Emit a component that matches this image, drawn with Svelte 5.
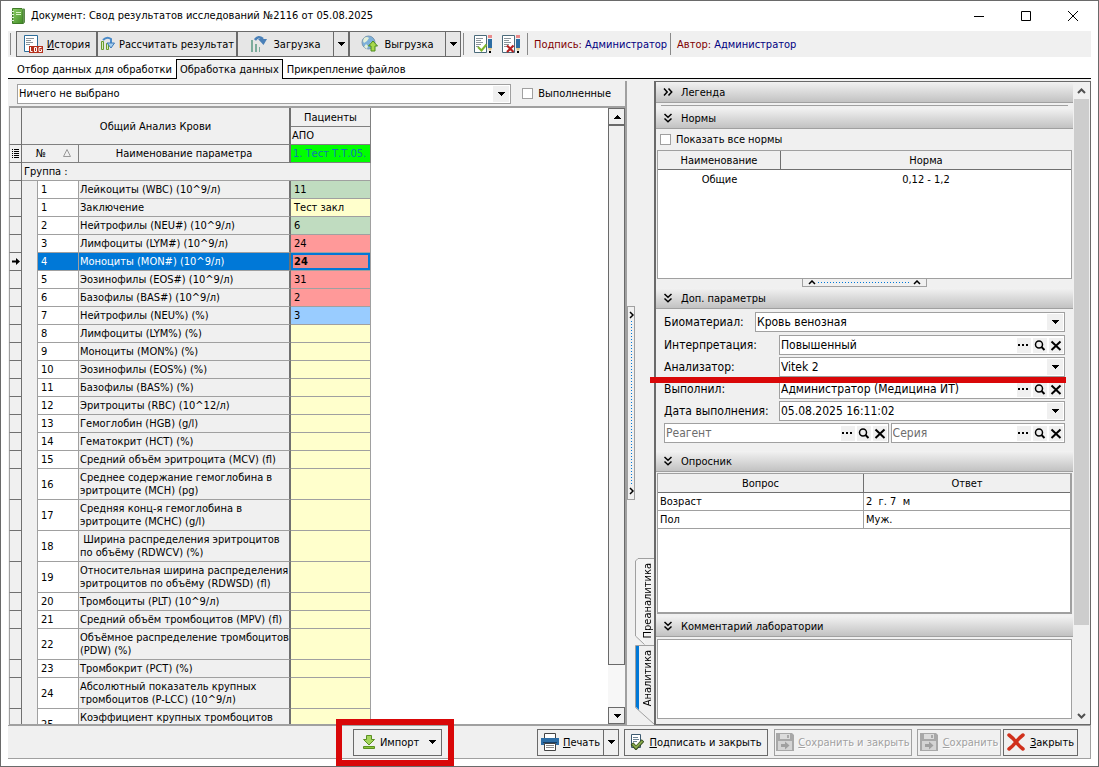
<script>
  const columns = { group: "Общий Анализ Крови", patients: "Пациенты", code: "АПО" };

  const rows = [
    { no: "1", name: "Лейкоциты (WBC) (10^9/л)", value: "11", state: "normal" },
    { no: "1", name: "Заключение", value: "Тест закл", state: "empty" },
    { no: "2", name: "Нейтрофилы (NEU#) (10^9/л)", value: "6", state: "normal" },
    { no: "3", name: "Лимфоциты (LYM#) (10^9/л)", value: "24", state: "high" },
    { no: "4", name: "Моноциты (MON#) (10^9/л)", value: "24", state: "high", selected: true },
    { no: "5", name: "Эозинофилы (EOS#) (10^9/л)", value: "31", state: "high" },
    { no: "6", name: "Базофилы (BAS#) (10^9/л)", value: "2", state: "high" },
    { no: "7", name: "Нейтрофилы (NEU%) (%)", value: "3", state: "low" },
    { no: "8", name: "Лимфоциты (LYM%) (%)" },
    { no: "9", name: "Моноциты (MON%) (%)" },
    { no: "10", name: "Эозинофилы (EOS%) (%)" },
    { no: "11", name: "Базофилы (BAS%) (%)" },
    { no: "12", name: "Эритроциты (RBC) (10^12/л)" },
    { no: "13", name: "Гемоглобин (HGB) (g/l)" },
    { no: "14", name: "Гематокрит (HCT) (%)" },
    { no: "15", name: "Средний объём эритроцита (MCV) (fl)" },
    { no: "16", name: "Среднее содержание гемоглобина в\nэритроците (MCH) (pg)" },
    { no: "17", name: "Средняя конц-я гемоглобина в\nэритроците (MCHC) (g/l)" },
    { no: "18", name: " Ширина распределения эритроцитов\nпо объёму (RDWCV) (%)" },
    { no: "19", name: "Относительная ширина распределения\nэритроцитов по объёму (RDWSD) (fl)" },
    { no: "20", name: "Тромбоциты (PLT) (10^9/л)" },
    { no: "21", name: "Средний объём тромбоцитов (MPV) (fl)" },
    { no: "22", name: "Объёмное распределение тромбоцитов\n(PDW) (%)" },
    { no: "23", name: "Тромбокрит (PCT) (%)" },
    { no: "24", name: "Абсолютный показатель крупных\nтромбоцитов (P-LCC) (10^9/л)" },
    { no: "25", name: "Коэффициент крупных тромбоцитов\n(P-LCR) (%)" },
  ];

  const answers = [
    { question: "Возраст", answer: "2  г. 7  м" },
    { question: "Пол", answer: "Муж." },
  ];

  let tab = "process";
  let onlyDone = false;
  let allNorms = false;
  let interpretation = "Повышенный";
  let performer = "Администратор (Медицина ИТ)";
  let reagent = "";
  let series = "";
</script>

{#snippet arrow()}
  <svg class="arrow" width="8" height="4" viewBox="0 0 8 4" shape-rendering="crispEdges"><path d="M0 0h8L4 4z" /></svg>
{/snippet}

{#snippet chevrons(open)}
  <svg class="chevrons" width="10" height="10" viewBox="0 0 10 10" fill="none" stroke="#000" stroke-width="1.5">
    {#if open}
      <path d="M1.500 1L5 4.200 8.500 1M1.500 5.500L5 8.700 8.500 5.500" />
    {:else}
      <path d="M1 1.500L4.200 5 1 8.500M5.500 1.500L8.700 5 5.500 8.500" />
    {/if}
  </svg>
{/snippet}

{#snippet sheet(ok)}
  <svg width="20" height="20" viewBox="0 0 20 20">
    <path d="M1.500 1.500h12v17h-12z" fill="#fff" stroke="#4a6a7a" />
    <path d="M3 4.500h7M3 6.500h5M3 8.500h7M3 10.500h5M3 12.500h3" stroke="#8a949a" />
    {#if ok}
      <path d="M5 13l3.500 3.500 5-6" fill="none" stroke="#7fb52c" stroke-width="2" />
    {:else}
      <path d="M6 11.500l6.500 6.500M12.500 11.500L6 18" stroke="#b52020" stroke-width="2.200" />
    {/if}
    <path d="M15 1h4v3h-4z" fill="#e98a8a" />
    <path d="M15 5h4v9h-4z" fill="#2d6da3" />
    <path d="M15 14h4l-1 2.500h-2z" fill="#e3c88a" />
    <path d="M16 17h2v2h-2z" fill="#000" />
  </svg>
{/snippet}

{#snippet disk()}
  <svg width="18" height="18" viewBox="0 0 18 18">
    <path d="M0 0h16l2 2v16H0z" fill="#a8a8a8" />
    <path d="M4 1h10v5H4z" fill="#dcdcdc" />
    <path d="M11 2h2v3h-2z" fill="#a8a8a8" />
    <path d="M2 8h14v9H2z" fill="#d4d4d4" />
    <path d="M5 11h4V8.500l4.500 4-4.500 4V14H5z" fill="#a0a0a0" />
  </svg>
{/snippet}

{#snippet pickers(name)}
  <button class="pick" aria-label="Выбрать: {name}">
    <svg width="14" height="15" viewBox="0 0 14 15" shape-rendering="crispEdges"><path d="M1 6h2v2H1zM5 6h2v2H5zM9 6h2v2H9z" /></svg>
  </button>
  <button class="pick" aria-label="Найти: {name}">
    <svg width="14" height="15" viewBox="0 0 14 15" fill="none" stroke="#000">
      <circle cx="6" cy="6.500" r="3.500" stroke-width="1.500" />
      <path d="M8.500 9l3 3" stroke-width="2" />
    </svg>
  </button>
  <button class="pick" aria-label="Очистить: {name}">
    <svg width="14" height="15" viewBox="0 0 14 15" stroke="#000" stroke-width="2"><path d="M2.500 3.500l9 8.500M11.500 3.500l-9 8.500" /></svg>
  </button>
{/snippet}

<div class="window">
  <header class="titlebar">
    <svg width="14" height="16" viewBox="0 0 14 16">
      <defs>
        <linearGradient id="cover" x1="0" y1="0" x2="1" y2="1">
          <stop offset="0" stop-color="#8fd068" />
          <stop offset="1" stop-color="#3f8a24" />
        </linearGradient>
      </defs>
      <path d="M12 1h1.500v13.500L12 15.500z" fill="#c9d8c0" stroke="#5a8a48" />
      <path d="M1.500.5h9.500l1 1v14H1.500z" fill="url(#cover)" stroke="#3f7a28" />
      <path d="M5 4h5v1H5zM5 6h5v1H5z" fill="#d8f4c4" />
      <path d="M0 3.500h3M0 6.500h3M0 9.500h3M0 12.500h3" stroke="#dfeedd" />
    </svg>
    <h1>Документ: Свод результатов исследований №2116 от 05.08.2025</h1>
    <div class="controls">
      <button aria-label="Свернуть"><svg width="12" height="12" viewBox="0 0 12 12"><path d="M1 6.500h10" stroke="#000" /></svg></button>
      <button aria-label="Развернуть"><svg width="12" height="12" viewBox="0 0 12 12"><path d="M1.500 1.500h9v9h-9z" fill="none" stroke="#000" /></svg></button>
      <button aria-label="Закрыть окно"><svg width="12" height="12" viewBox="0 0 12 12"><path d="M1 1l10 10M11 1L1 11" stroke="#000" /></svg></button>
    </div>
  </header>

  <div class="frame">
    <div class="toolbar">
      <span class="line"></span>
      <button class="tool history">
        <svg width="20" height="20" viewBox="0 0 20 20">
          <path d="M1.500 1.500h13v16h-13z" fill="#fff" stroke="#2d6d9a" />
          <path d="M3 4.500h8M3 6.500h5M3 8.500h7M3 10.500h4" stroke="#8a949a" />
          <path d="M6 12h14v7H6z" fill="#b5301c" />
          <path d="M7.500 13v4.500h2M11.500 13.500h2v4h-2zM18.500 13.500h-2.500v4h2.500v-2h-1" fill="none" stroke="#fff" />
        </svg>
        <span><u>И</u>стория</span>
      </button>
      <button class="tool calc">
        <svg width="16" height="16" viewBox="0 0 16 16">
          <path d="M1.500 5.500h2v8h-2zM6.500 7.500h2v6h-2z" fill="#d8ecc0" stroke="#6a9a2c" />
          <path d="M3 4Q7 0 11 3v5" fill="none" stroke="#4a8ac8" stroke-width="2" />
          <path d="M7 7h7.500L11 12z" fill="#a8d0f0" stroke="#3a78b8" />
        </svg>
        <span>Рассчитать результат</span>
      </button>
      <button class="tool load">
        <svg width="18" height="18" viewBox="0 0 18 18">
          <path d="M1 5h2v12H1zM5 9h2v8H5zM9 12h1v5H9z" fill="#7cac9c" />
          <path d="M5 5Q8 0 13 4" fill="none" stroke="#4a80b8" stroke-width="2.500" />
          <path d="M8 4h9l-3.500 6z" fill="#4a80b8" />
        </svg>
        <span>Загрузка</span>
      </button>
      <button class="drop" aria-label="Варианты загрузки">{@render arrow()}</button>
      <button class="tool load">
        <svg width="18" height="18" viewBox="0 0 18 18">
          <circle cx="7.500" cy="7.500" r="6.500" fill="#7db0da" stroke="#7a98b0" />
          <path d="M3 3q3-2 5 0l-2 3-3 2-1-2zM9 8l4-2v4l-3 3zM5 9l2 2-1 3-3-2z" fill="#e4efd8" />
          <path d="M12 6l4.500 5h-2.500v5h-4v-5H7.500z" fill="#a8d84c" stroke="#4a8a1c" />
        </svg>
        <span>Выгрузка</span>
      </button>
      <button class="drop" aria-label="Варианты выгрузки">{@render arrow()}</button>
      <span class="line"></span>
      <button class="flat" aria-label="Подписать">{@render sheet(true)}</button>
      <button class="flat" aria-label="Снять подпись">{@render sheet(false)}</button>
      <span class="line"></span>
      <span class="meta">Подпись: <b>Администратор</b></span>
      <span class="line"></span>
      <span class="meta">Автор: <b>Администратор</b></span>
    </div>

    <nav class="tabs">
      <button class:active={tab === "select"} on:click={() => (tab = "select")}>Отбор данных для обработки</button>
      <button class:active={tab === "process"} on:click={() => (tab = "process")}>Обработка данных</button>
      <button class:active={tab === "files"} on:click={() => (tab = "files")}>Прикрепление файлов</button>
    </nav>

    <main>
      <section class="results">
        <div class="filter">
          <div class="field wide">
            <select aria-label="Фильтр"><option>Ничего не выбрано</option></select>
            {@render arrow()}
          </div>
          <label class="check"><input type="checkbox" bind:checked={onlyDone} />Выполненные</label>
        </div>
        <div class="grid">
          <div class="viewport">
            <table class="params">
              <colgroup><col class="c-mark" /><col class="c-indent" /><col class="c-no" /><col /><col class="c-value" /></colgroup>
              <thead>
                <tr>
                  <th rowspan="2" class="mark"></th>
                  <th rowspan="2" colspan="3" class="edge">{columns.group}</th>
                  <th class="top">{columns.patients}</th>
                </tr>
                <tr><th class="left">{columns.code}</th></tr>
                <tr>
                  <th class="mark">
                    <svg width="7" height="9" viewBox="0 0 7 9" shape-rendering="crispEdges"><path d="M0 0h1v1H0zM2 0h5v1H2zM0 2h1v1H0zM2 2h5v1H2zM0 4h1v1H0zM2 4h5v1H2zM0 6h1v1H0zM2 6h5v1H2zM0 8h1v1H0zM2 8h5v1H2z" /></svg>
                  </th>
                  <th colspan="2" class="number">
                    <span>№</span>
                    <svg width="8" height="8" viewBox="0 0 8 8"><path d="M.5 7.500h7L4 .5z" fill="none" stroke="#999" /></svg>
                  </th>
                  <th class="edge">Наименование параметра</th>
                  <th class="patient">1. Тест Т.Т.05.</th>
                </tr>
              </thead>
              <tbody>
                <tr><td class="mark"></td><td colspan="4" class="group">Группа :</td></tr>
                {#each rows as row}
                  <tr class:selected={row.selected}>
                    <td class="mark">
                      {#if row.selected}
                        <svg width="8" height="7" viewBox="0 0 8 7"><path d="M0 2.500h4V0l4 3.500L4 7V4.500H0z" /></svg>
                      {/if}
                    </td>
                    <td class="indent"></td>
                    <td class="no">{row.no}</td>
                    <td class="name">{row.name}</td>
                    <td class="value {row.state ?? 'empty'}">{row.value ?? ""}</td>
                  </tr>
                {/each}
              </tbody>
            </table>
          </div>
          <div class="scroll classic">
            <button aria-label="Вверх"><svg width="8" height="4" viewBox="0 0 8 4" shape-rendering="crispEdges"><path d="M0 4h8L4 0z" /></svg></button>
            <span class="thumb"></span>
            <span class="track"></span>
            <button aria-label="Вниз">{@render arrow()}</button>
          </div>
        </div>
      </section>

      <div class="splitter">
        <div class="grip">
          <svg width="5" height="8" viewBox="0 0 5 8"><path d="M1 1l3 3-3 3" fill="none" stroke="#000" stroke-width="1.500" /></svg>
          <span></span>
          <svg width="5" height="8" viewBox="0 0 5 8"><path d="M1 1l3 3-3 3" fill="none" stroke="#000" stroke-width="1.500" /></svg>
        </div>
      </div>

      <div class="sidetabs">
        <button class="pre">
          <svg width="20" height="87" viewBox="0 0 20 87"><path d="M20 .5H3L.5 3v75l9 8.500" fill="#f4f4f4" stroke="#a0a0a0" /></svg>
          <span>Преаналитика</span>
        </button>
        <button class="ana">
          <svg width="20" height="80" viewBox="0 0 20 80">
            <path d="M20 .5H.5v62l19 17z" fill="#f0f0f0" stroke="#a0a0a0" />
            <path d="M1 1h3v64L1 62z" fill="#0078d7" />
          </svg>
          <span>Аналитика</span>
        </button>
      </div>

      <aside>
        <div class="sections">
          <button class="bar">{@render chevrons(false)}Легенда</button>
          <hr />
          <button class="bar">{@render chevrons(true)}Нормы</button>
          <div class="norms">
            <label class="check"><input type="checkbox" bind:checked={allNorms} />Показать все нормы</label>
            <div class="sheet norms-list">
              <table>
                <colgroup><col class="c-norm" /><col /></colgroup>
                <thead><tr><th>Наименование</th><th>Норма</th></tr></thead>
                <tbody><tr><td>Общие</td><td>0,12 - 1,2</td></tr></tbody>
              </table>
            </div>
            <div class="hgrip">
              <svg width="8" height="5" viewBox="0 0 8 5"><path d="M1 4l3-3 3 3" fill="none" stroke="#000" stroke-width="1.500" /></svg>
              <span></span>
              <svg width="8" height="5" viewBox="0 0 8 5"><path d="M1 4l3-3 3 3" fill="none" stroke="#000" stroke-width="1.500" /></svg>
            </div>
          </div>

          <button class="bar">{@render chevrons(true)}Доп. параметры</button>
          <div class="extra">
            <div class="row">
              <label for="bio" class="short">Биоматериал:</label>
              <div class="field"><select id="bio"><option>Кровь венозная</option></select>{@render arrow()}</div>
            </div>
            <div class="row">
              <label for="interp">Интерпретация:</label>
              <div class="field"><input id="interp" bind:value={interpretation} />{@render pickers("интерпретация")}</div>
            </div>
            <div class="row marked">
              <label for="device">Анализатор:</label>
              <div class="field"><select id="device"><option>Vitek 2</option></select>{@render arrow()}</div>
            </div>
            <div class="row">
              <label for="performer">Выполнил:</label>
              <div class="field"><input id="performer" bind:value={performer} />{@render pickers("выполнил")}</div>
            </div>
            <div class="row">
              <label for="date">Дата выполнения:</label>
              <div class="field"><select id="date"><option>05.08.2025 16:11:02</option></select>{@render arrow()}</div>
            </div>
            <div class="row pair">
              <div class="field reagent"><input aria-label="Реагент" placeholder="Реагент" bind:value={reagent} />{@render pickers("реагент")}</div>
              <div class="field series"><input aria-label="Серия" placeholder="Серия" bind:value={series} />{@render pickers("серия")}</div>
            </div>
          </div>

          <button class="bar">{@render chevrons(true)}Опросник</button>
          <div class="sheet survey">
            <table>
              <thead><tr><th>Вопрос</th><th>Ответ</th></tr></thead>
              <tbody>
                {#each answers as { question, answer }}
                  <tr><td>{question}</td><td>{answer}</td></tr>
                {/each}
              </tbody>
            </table>
          </div>

          <button class="bar">{@render chevrons(true)}Комментарий лаборатории</button>
          <textarea aria-label="Комментарий лаборатории"></textarea>
        </div>
        <div class="scroll modern">
          <button aria-label="Прокрутить вверх"><svg width="9" height="6" viewBox="0 0 9 6"><path d="M1 5l3.500-3.500L8 5" /></svg></button>
          <span class="thumb"></span>
          <button aria-label="Прокрутить вниз"><svg width="9" height="6" viewBox="0 0 9 6"><path d="M1 1l3.500 3.500L8 1" /></svg></button>
        </div>
      </aside>
    </main>

    <footer>
      <div class="import">
        <button class="action">
          <svg width="12" height="14" viewBox="0 0 12 14">
            <path d="M3.500.5h5v4h3L6 10 .5 4.500h3z" fill="#a4d65c" stroke="#5a8f22" />
            <path d="M.5 11.500h11v2H.5z" fill="#8cc63c" stroke="#5a8f22" />
          </svg>
          <span>Импорт</span>
          {@render arrow()}
        </button>
      </div>
      <div class="split">
        <button class="action print">
          <svg width="18" height="18" viewBox="0 0 18 18">
            <path d="M3.500.5h11v5h-11z" fill="#fff" stroke="#444" />
            <path d="M0 5h18v7H0z" fill="#2d6ea6" />
            <path d="M2 9h14v1H2z" fill="#173f66" />
            <path d="M3.500 10.500h11v7h-11z" fill="#fff" stroke="#444" />
            <path d="M5 12.500h8M5 14.500h8" stroke="#888" />
          </svg>
          <span><u>П</u>ечать</span>
        </button>
        <button class="drop" aria-label="Варианты печати">{@render arrow()}</button>
      </div>
      <button class="action sign">
        <svg width="14" height="16" viewBox="0 0 14 16">
          <path d="M1.500.5h9v13h-9z" fill="#fff" stroke="#3c5a70" />
          <path d="M3 3.500h5M3 5.500h6M3 7.500h4" stroke="#6d8494" />
          <path d="M2 9.500l4 4.500 7-7.500" fill="none" stroke="#2c4414" stroke-width="3.500" />
          <path d="M2.500 10l3.500 3.500L12.500 7" fill="none" stroke="#86a84c" stroke-width="2" />
        </svg>
        <span><u>П</u>одписать и закрыть</span>
      </button>
      <button class="action save-close" disabled>{@render disk()}<span><u>С</u>охранить и закрыть</span></button>
      <button class="action save" disabled>{@render disk()}<span><u>С</u>охранить</span></button>
      <button class="action close">
        <svg width="18" height="18" viewBox="0 0 18 18"><path d="M2 2q4 3 7 7t7 7M16 2q-4 3-7 7t-7 7" fill="none" stroke="#d0301c" stroke-width="3.500" stroke-linecap="round" /></svg>
        <span><u>З</u>акрыть</span>
      </button>
    </footer>
  </div>
</div>

<style>
  :global(body) {
    background: #fff;
  }

  .window,
  .window button,
  .window input,
  .window select,
  .window textarea {
    font-family: "DejaVu Sans Condensed", "Noto Sans", sans-serif;
    font-size: 11px;
    line-height: 13px;
    color: #000;
  }

  .window,
  .window * {
    box-sizing: border-box;
  }

  .window {
    display: flex;
    flex-direction: column;
    height: 100vh;
    padding: 0 7px 7px;
    border: 1px solid #6a6a6a;
    overflow: hidden;
  }

  button {
    display: flex;
    align-items: center;
    padding: 0;
    border: 0;
    background: none;
    white-space: nowrap;
  }

  svg {
    flex: none;
    display: block;
  }

  .titlebar {
    display: flex;
    align-items: center;
    flex: none;
    height: 30px;
    padding-left: 3px;
  }

  h1 {
    margin: 0 0 0 6px;
    font-size: 11px;
    font-weight: 400;
    line-height: 16px;
    white-space: nowrap;
  }

  .controls {
    display: flex;
    margin-left: auto;
  }

  .controls button {
    justify-content: center;
    width: 47px;
    height: 29px;
  }

  .controls button:last-child {
    margin-right: -5px;
  }

  .frame {
    display: flex;
    flex-direction: column;
    flex: 1;
    min-height: 0;
  }

  .toolbar {
    display: flex;
    align-items: center;
    flex: none;
    height: 26px;
    background: #f0f0f0;
  }

  .line {
    width: 1px;
    height: 22px;
    margin-left: 2px;
    background: #8a8a8a;
  }

  .tool {
    justify-content: center;
    height: 26px;
    gap: 4px;
    border: 1px solid #6a6a6a;
    background: #e6e6e6;
  }

  .history {
    width: 81px;
    margin-left: 5px;
  }

  .calc {
    width: 140px;
    gap: 3px;
  }

  .load {
    width: 97px;
    gap: 5px;
  }

  .drop {
    justify-content: center;
    width: 15px;
    height: 26px;
    border: 1px solid #6a6a6a;
    border-left: 0;
    background: #e6e6e6;
  }

  .flat {
    width: 28px;
    justify-content: center;
  }

  .flat:has(+ .flat) {
    margin-left: 5px;
  }

  .meta {
    margin: 0 1px 0 6px;
    color: #800000;
    white-space: nowrap;
  }

  .meta b {
    font-weight: 400;
    color: #000080;
  }

  .tabs {
    display: flex;
    align-items: flex-end;
    flex: none;
    height: 22px;
    padding-left: 5px;
    box-shadow: inset 0 -1px #000;
  }

  .tabs button {
    height: 20px;
    padding: 0 3px;
    border: 1px solid transparent;
    border-bottom: 0;
  }

  .tabs .active {
    border-color: #000;
    background: #f0f0f0;
  }

  main {
    display: flex;
    flex: 1;
    min-height: 0;
    padding-top: 2px;
    background: #f0f0f0;
  }

  .results {
    display: flex;
    flex-direction: column;
    flex: 1;
    min-width: 0;
    margin-left: 1px;
    border-right: 2px solid #a0a0a0;
    border-bottom: 1px solid #a0a0a0;
  }

  .filter {
    display: flex;
    align-items: center;
    gap: 11px;
    flex: none;
    height: 27px;
    padding: 0 14px 0 8px;
    border-bottom: 2px solid #a0a0a0;
  }

  .field {
    display: flex;
    align-items: center;
    flex: 1;
    min-width: 0;
    height: 20px;
    padding-right: 1px;
    border: 1px solid #a0a0a0;
    background: #fff;
    position: relative;
  }

  .field select,
  .field input {
    flex: 1;
    width: 100%;
    min-width: 0;
    height: 18px;
    padding: 0 1px;
    border: 0;
    outline: 0;
    border-radius: 0;
    appearance: none;
    background: transparent;
  }

  .field select {
    background: linear-gradient(#f0f0f0, #f0f0f0) right / 16px 16px no-repeat;
  }

  .field > .arrow {
    position: absolute;
    right: 5px;
    pointer-events: none;
  }

  .check {
    display: flex;
    align-items: center;
    gap: 5px;
    white-space: nowrap;
  }

  .check input {
    width: 11px;
    height: 11px;
    margin: 0;
    border: 1px solid #a0a0a0;
    appearance: none;
    background: #fff;
  }

  .check input:checked {
    background: #0078d7;
  }

  .grid {
    display: flex;
    flex: 1;
    min-height: 0;
    background: #fff;
  }

  .viewport {
    flex: 1;
    min-width: 0;
    overflow: hidden;
  }

  table {
    table-layout: fixed;
    border-collapse: separate;
    border-spacing: 0;
  }

  th {
    font-weight: 400;
  }

  .params {
    width: 362px;
  }

  .c-mark {
    width: 13px;
  }

  .c-indent {
    width: 16px;
  }

  .c-no {
    width: 41px;
  }

  .c-value {
    width: 80px;
  }

  .params th,
  .params td {
    height: 18px;
    padding: 2px 1px;
    overflow: hidden;
    border-right: 1px solid #a0a0a0;
    border-bottom: 1px solid #a0a0a0;
    background: #f0f0f0;
    white-space: pre;
    text-align: left;
  }

  .params th {
    border-color: #808080;
    text-align: center;
  }

  .params .top {
    height: 19px;
  }

  .params .mark {
    padding: 0 2px;
    border-color: #707070;
    border-left: 1px solid #a0a0a0;
  }

  .params .left {
    text-align: left;
  }

  .params .edge,
  .params .name {
    border-right: 2px solid #707070;
  }

  .params .number {
    padding-left: 8px;
  }

  .number span {
    margin-right: 14px;
  }

  .number svg {
    display: inline-block;
  }

  .params .patient {
    padding-left: 2px;
    background: #0f0;
    color: #1078b0;
    text-align: left;
  }

  .params .group {
    padding-left: 2px;
  }

  .params .indent {
    border-bottom: 0;
  }

  .params .no {
    padding-left: 3px;
    background: #fff;
  }

  .params .value {
    padding-left: 3px;
  }

  .params .normal {
    background: #c0dcc0;
  }

  .params .empty {
    background: #ffffcc;
  }

  .params .high {
    background: #ff9999;
  }

  .params .low {
    background: #99ccff;
  }

  .params .selected .no,
  .params .selected .name {
    background: #0078d7;
    color: #fff;
  }

  .params .selected .value {
    background: #f08a8a;
    font-weight: 700;
    box-shadow: inset 0 0 0 2px #0078d7;
  }

  .scroll {
    display: flex;
    flex-direction: column;
    flex: none;
  }

  .scroll button {
    flex: none;
    justify-content: center;
  }

  .classic {
    width: 17px;
  }

  .classic button,
  .classic .thumb {
    height: 17px;
    border: 1px solid #6a6a6a;
    background: #f0f0f0;
  }

  .classic .thumb {
    flex: 540;
  }

  .classic .track {
    flex: 42;
    background: #f7f7f7;
  }

  .splitter {
    display: flex;
    align-items: center;
    width: 8px;
    flex: none;
  }

  .grip {
    display: flex;
    flex-direction: column;
    align-items: center;
    justify-content: space-between;
    width: 8px;
    height: 194px;
    padding: 4px 0;
    border: 1px solid #a0a0a0;
  }

  .grip span {
    flex: 1;
    width: 1px;
    margin: 2px 0;
    background: repeating-linear-gradient(#0078d7 0 1px, transparent 1px 3px);
  }

  .sidetabs {
    display: flex;
    flex-direction: column;
    justify-content: flex-end;
    width: 19px;
    flex: none;
  }

  .sidetabs button {
    display: grid;
    justify-items: end;
  }

  .sidetabs svg,
  .sidetabs span {
    grid-area: 1 / 1;
  }

  .sidetabs span {
    align-self: start;
    margin: 5px 1px 0 0;
    writing-mode: vertical-rl;
    transform: rotate(180deg);
  }

  aside {
    display: flex;
    width: 437px;
    flex: none;
    border: 1px solid #6a6a6a;
    border-left-width: 2px;
  }

  .sections {
    display: flex;
    flex-direction: column;
    flex: 1;
    min-width: 0;
  }

  .bar {
    flex: none;
    width: 100%;
    height: 21px;
    padding-left: 7px;
    gap: 8px;
    border-bottom: 1px solid #a0a0a0;
    background: linear-gradient(#f2f2f2, #c2c2c2);
  }

  hr {
    flex: none;
    width: calc(100% - 10px);
    height: 1px;
    margin: 2px auto;
    border: 0;
    background: #a0a0a0;
  }

  .norms {
    flex: none;
    margin: 0 1px 1px;
  }

  .norms .check {
    height: 21px;
    padding-left: 3px;
  }

  .sheet {
    flex: none;
    border: 1px solid #a0a0a0;
    background: #fff;
  }

  .sheet table {
    width: 100%;
  }

  .sheet th {
    height: 19px;
    padding: 0;
    border-bottom: 1px solid #707070;
    background: #f0f0f0;
  }

  .sheet th:first-child {
    border-right: 1px solid #707070;
  }

  .sheet td {
    height: 18px;
    padding: 2px 1px;
    white-space: pre;
  }

  .norms-list {
    height: 129px;
  }

  .norms-list td {
    text-align: center;
  }

  .c-norm {
    width: 123px;
  }

  .hgrip {
    display: flex;
    align-items: center;
    width: 125px;
    height: 8px;
    margin: 0 auto;
    padding: 0 5px;
    border: 1px solid #a0a0a0;
    border-top: 0;
  }

  .hgrip span {
    flex: 1;
    height: 1px;
    margin: 0 2px;
    background: repeating-linear-gradient(to right, #0078d7 0 1px, transparent 1px 3px);
  }

  .extra {
    display: flex;
    flex-direction: column;
    gap: 2px;
    flex: none;
    padding: 3px 8px 8px;
  }

  .row {
    display: flex;
    align-items: center;
    position: relative;
  }

  .row:first-child {
    margin-bottom: 1px;
  }

  .extra label {
    width: 115px;
    flex: none;
    font-size: 12px;
    line-height: 16px;
    white-space: nowrap;
  }

  .extra .short {
    width: 91px;
  }

  .window .extra input,
  .window .extra select {
    font-size: 12px;
  }

  .marked::after {
    content: "";
    position: absolute;
    top: 20px;
    left: -14px;
    right: -1px;
    z-index: 1;
    height: 6px;
    background: #d90708;
  }

  .pair {
    gap: 2px;
  }

  .reagent {
    flex: 225;
  }

  .series {
    flex: 174;
  }

  .pick {
    flex: none;
    margin-left: 2px;
    background: #f0f0f0;
  }

  input::placeholder {
    color: #6d6d6d;
    opacity: 1;
  }

  .survey {
    height: 141px;
    margin: 1px 1px 2px;
    border-right-width: 2px;
    border-bottom-width: 2px;
  }

  .survey td {
    padding-left: 2px;
    border-bottom: 1px solid #a0a0a0;
  }

  .survey td:first-child {
    border-right: 1px solid #a0a0a0;
  }

  textarea {
    flex: 1;
    min-height: 0;
    margin: 2px 1px 5px;
    border: 1px solid #a0a0a0;
    outline: 0;
    resize: none;
    background: #fff;
  }

  .modern {
    width: 17px;
    padding: 0 1px;
  }

  .modern button {
    height: 17px;
  }

  .modern path {
    fill: none;
    stroke: #505050;
    stroke-width: 2;
  }

  .modern .thumb {
    height: 82%;
    margin-bottom: auto;
    background: #cdcdcd;
  }

  footer {
    display: flex;
    align-items: center;
    flex: none;
    height: 34px;
    padding: 0 12px 0 4px;
    border: 1px solid #a0a0a0;
    border-left: 0;
    background: #f0f0f0;
  }

  .import {
    position: relative;
    margin: 0 auto 0 32%;
  }

  .import::after {
    content: "";
    position: absolute;
    inset: -10px -12px -10px -17px;
    border: 6px solid #d90708;
    pointer-events: none;
  }

  .action {
    justify-content: center;
    height: 27px;
    gap: 5px;
    border: 1px solid #6a6a6a;
  }

  .import .action {
    width: 89px;
    padding-left: 4px;
  }

  .import .arrow {
    margin-left: 4px;
  }

  .split {
    display: flex;
    margin-right: 5px;
  }

  .split .drop {
    height: 27px;
    background: none;
  }

  .print {
    width: 67px;
    gap: 4px;
  }

  .sign {
    width: 144px;
    margin-right: 6px;
  }

  .save-close {
    width: 138px;
    margin-right: 5px;
    gap: 4px;
  }

  .save {
    width: 84px;
    margin-right: 2px;
  }

  .close {
    width: 75px;
  }

  .window .action:disabled {
    border-color: #a0a0a0;
    color: #a0a0a0;
    text-shadow: 1px 1px #fff;
  }
</style>
